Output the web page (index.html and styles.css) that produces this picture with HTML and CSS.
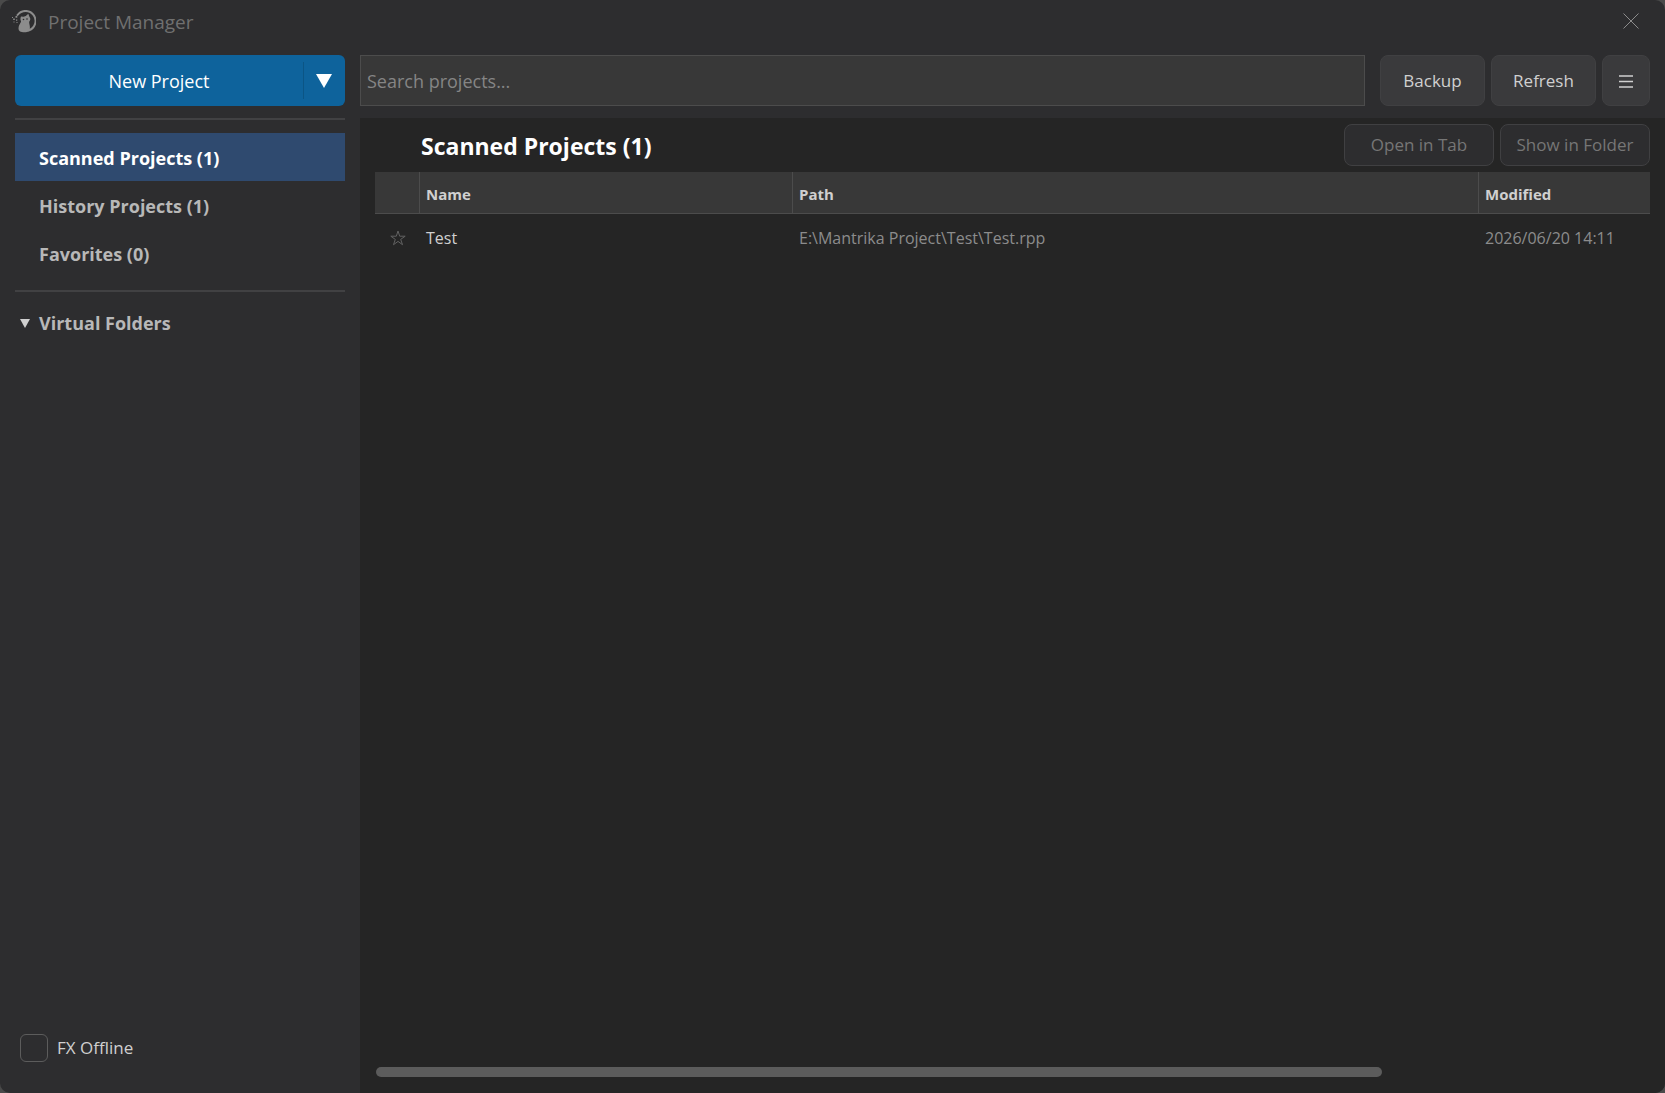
FILE: index.html
```html
<!DOCTYPE html>
<html lang="en">
<head>
  <meta charset="utf-8">
  <title>Project Manager</title>
  <link rel="stylesheet" href="styles.css">
</head>
<body>
  <div class="window">
    <header class="titlebar">
      <svg class="logo" viewBox="0 0 24 24" aria-hidden="true">
        <path d="M5.500 5A10 10 0 1 1 16.500 20.500" fill="none" stroke="currentColor" stroke-width="2" stroke-linecap="round"/>
        <path d="M9 6.500l2.500.3 2.300-.8 2.500-2.200 1.200 3.200c1.200 1.200 1 3.200-.2 4.500-.6 1.500.8 3.500.6 6.500-.1 3-1.400 4.300-5.400 4.300-4 0-6-1-6-4 0-3.500 2.300-4.800 2.600-7C8.200 9.800 8.300 8.300 9 6.500z" fill="currentColor"/>
        <path d="M3.500 6h1.800v1.800H3.500zM1.200 8.500h1.600v1.600H1.200zM4 9.500h1.300v1.300H4zM0 7h1v1H0zM1.500 11.500h1v1h-1zM4.500 12h1v1h-1z" fill="currentColor"/>
        <circle cx="11.500" cy="9.500" r=".8" class="logo-eye"/>
        <circle cx="15" cy="9" r=".8" class="logo-eye"/>
      </svg>
      <h1 class="title">Project Manager</h1>
      <button class="close" type="button" aria-label="Close">
        <svg viewBox="0 0 16 16" aria-hidden="true"><path d="M0.500 0.500l15 15M15.500 0.500l-15 15"/></svg>
      </button>
    </header>

    <div class="body">
      <aside class="sidebar">
        <div class="split">
          <button class="split-main" type="button">New Project</button>
          <button class="split-more" type="button" aria-label="More new project options">
            <svg viewBox="0 0 16 14" aria-hidden="true"><path d="M0 0h16L8 14z"/></svg>
          </button>
        </div>
        <hr class="divider">
        <nav class="nav">
          <a class="nav-item nav-item-active" href="#scanned">Scanned Projects (1)</a>
          <a class="nav-item" href="#history">History Projects (1)</a>
          <a class="nav-item" href="#favorites">Favorites (0)</a>
        </nav>
        <hr class="divider">
        <button class="folders" type="button" aria-expanded="true">
          <svg viewBox="0 0 10 9" aria-hidden="true"><path d="M0 0h10L5 9z"/></svg>
          Virtual Folders
        </button>
        <label class="offline"><input type="checkbox">FX Offline</label>
      </aside>

      <main class="main">
        <div class="toolbar">
          <input class="search" type="text" placeholder="Search projects..." aria-label="Search projects">
          <div class="actions">
            <button class="button" type="button">Backup</button>
            <button class="button" type="button">Refresh</button>
            <button class="button button-icon" type="button" aria-label="Menu">
              <svg viewBox="0 0 14 13" aria-hidden="true"><path d="M0 1h14M0 6.500h14M0 12h14"/></svg>
            </button>
          </div>
        </div>

        <section class="panel" id="scanned">
          <div class="panel-head">
            <h2 class="panel-title">Scanned Projects (1)</h2>
            <button class="button button-outline" type="button" disabled>Open in Tab</button>
            <button class="button button-outline" type="button" disabled>Show in Folder</button>
          </div>
          <table class="table">
            <thead>
              <tr>
                <th class="col-star" aria-label="Favorite"></th>
                <th class="col-name">Name</th>
                <th>Path</th>
                <th class="col-modified">Modified</th>
              </tr>
            </thead>
            <tbody>
              <tr>
                <td class="cell-star">
                  <button class="star" type="button" aria-label="Add to favorites">
                    <svg viewBox="0 0 16 16" aria-hidden="true"><path d="M8 1l1.700 5.200h5.500l-4.500 3.200 1.800 5.300L8 11.400l-4.500 3.300 1.800-5.300L.8 6.200h5.500z"/></svg>
                  </button>
                </td>
                <td class="cell-name">Test</td>
                <td>E:\Mantrika Project\Test\Test.rpp</td>
                <td>2026/06/20 14:11</td>
              </tr>
            </tbody>
          </table>
          <div class="scroll-track"><div class="scroll-thumb"></div></div>
        </section>
      </main>
    </div>
  </div>
</body>
</html>
```

FILE: styles.css
```css
* {
  box-sizing: border-box;
}

body {
  margin: 0;
  background: #4a4a4a;
  color: #d0d0d0;
  font: 18px/24px "Open Sans", "Noto Sans", sans-serif;
}

button,
input {
  margin: 0;
  font: inherit;
  color: inherit;
}

button {
  padding: 0;
  border: 0;
  background: none;
}

svg {
  display: block;
}

.window {
  display: flex;
  flex-direction: column;
  min-height: 100vh;
  overflow: hidden;
  border-radius: 10px;
  background: #2d2d2f;
}

/* Title bar */
.titlebar {
  display: flex;
  align-items: center;
  height: 55px;
  padding: 0 26px 12px 12px;
  color: #707070;
}

.logo {
  width: 24px;
  height: 24px;
  color: #8c8c8c;
}

.logo-eye {
  fill: #2d2d2f;
}

.title {
  flex: 1;
  margin: 0 0 0 12px;
  font-size: 19px;
  font-weight: 400;
}

.close {
  padding-bottom: 2px;
}

.close svg {
  width: 16px;
  height: 16px;
  fill: none;
  stroke: #8c8c8c;
}

.body {
  display: grid;
  flex: 1;
  grid-template-columns: 360px minmax(0, 1fr);
}

/* Sidebar */
.sidebar {
  display: flex;
  flex-direction: column;
  padding: 0 15px 31px;
}

.split {
  display: flex;
  height: 51px;
  border-radius: 6px;
  background: #0e639c;
  color: #fff;
}

.split-main {
  flex: 1;
}

.split-more {
  width: 42px;
  margin: 7px 0;
  padding-right: 2px;
  border-left: 1px solid #0b5585;
}

.split-more svg {
  width: 16px;
  height: 14px;
  margin: 0 auto;
  fill: #fff;
}

.divider {
  width: 100%;
  height: 2px;
  margin: 12px 0 13px;
  border: 0;
  background: #414143;
}

.nav {
  display: flex;
  flex-direction: column;
  padding-bottom: 1px;
}

.nav-item {
  padding: 13px 24px 11px;
  color: #b8b8b8;
  font-weight: 700;
  text-decoration: none;
}

.nav-item-active {
  background: #2f4a6f;
  color: #fff;
}

.folders {
  display: flex;
  align-items: center;
  gap: 9px;
  height: 36px;
  padding-left: 5px;
  color: #b8b8b8;
  font-weight: 700;
}

.folders svg {
  width: 10px;
  height: 9px;
  fill: #d0d0d0;
}

.offline {
  display: flex;
  align-items: center;
  gap: 9px;
  margin-top: auto;
  padding-left: 5px;
  font-size: 17px;
}

.offline input {
  width: 28px;
  height: 28px;
  appearance: none;
  border: 1px solid #5c5c5c;
  border-radius: 6px;
}

/* Main column */
.main {
  display: flex;
  flex-direction: column;
}

.toolbar {
  display: flex;
  gap: 15px;
  height: 63px;
  padding: 0 15px 12px 0;
}

.search {
  flex: 1;
  min-width: 0;
  padding: 0 6px;
  border: 1px solid #4c4c4c;
  border-radius: 0;
  background: #383838;
}

.search::placeholder {
  color: #858585;
  opacity: 1;
}

.actions {
  display: flex;
  gap: 6px;
}

.button {
  width: 105px;
  border: 1px solid #404042;
  border-radius: 8px;
  background: #3a3a3c;
  font-size: 17px;
}

.button-icon {
  width: 48px;
  padding-top: 2px;
}

.button-icon svg {
  width: 14px;
  height: 13px;
  margin: 0 auto;
  stroke: #d0d0d0;
  stroke-width: 1.5;
}

.button-outline {
  width: 150px;
  height: 42px;
  background: #2d2d2f;
  color: #767676;
}

.panel {
  display: flex;
  flex: 1;
  flex-direction: column;
  padding: 6px 15px 16px;
  background: #252525;
}

.panel-head {
  display: flex;
  align-items: center;
  gap: 6px;
  margin-bottom: 6px;
}

.panel-title {
  flex: 1;
  margin: 0;
  padding: 2px 0 0 46px;
  color: #fff;
  font-size: 23px;
  font-weight: 700;
}

.table {
  width: 100%;
  border-spacing: 0;
  table-layout: fixed;
  color: #8c8c8c;
  font-size: 16px;
  text-align: left;
}

.table th {
  height: 42px;
  padding: 2px 6px 0;
  border-bottom: 1px solid #4c4c4c;
  background: #383838;
  color: #d0d0d0;
  font-size: 15px;
  font-weight: 700;
}

.table th + th {
  border-left: 1px solid #4c4c4c;
}

.table td {
  height: 48px;
  padding: 0 7px;
}

.table .cell-name {
  color: #d0d0d0;
}

.col-star {
  width: 44px;
}

.col-name {
  width: 373px;
}

.col-modified {
  width: 172px;
}

.star {
  display: block;
  margin-left: 8px;
}

.star svg {
  width: 16px;
  height: 16px;
  fill: none;
  stroke: #626262;
}

.scroll-track {
  margin-top: auto;
  padding: 0 1px;
}

.scroll-thumb {
  width: 79%;
  height: 10px;
  border-radius: 5px;
  background: #5c5c5c;
}
```
